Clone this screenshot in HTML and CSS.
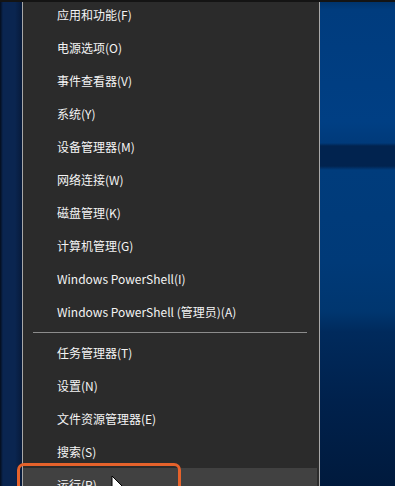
FILE: index.html
```html
<!DOCTYPE html>
<html lang="zh-CN">
<head>
<meta charset="utf-8">
<title>Win+X 菜单</title>
<link rel="stylesheet" href="styles.css">
</head>
<body>
<div class="topbar"></div>
<div class="screen">
  <div class="desk-left"></div>
  <div class="menu">
    <ul class="group group-first">
      <li class="item">应用和功能(F)</li>
      <li class="item">电源选项(O)</li>
      <li class="item">事件查看器(V)</li>
      <li class="item">系统(Y)</li>
      <li class="item">设备管理器(M)</li>
      <li class="item">网络连接(W)</li>
      <li class="item">磁盘管理(K)</li>
      <li class="item">计算机管理(G)</li>
      <li class="item">Windows PowerShell(I)</li>
      <li class="item">Windows PowerShell (管理员)(A)</li>
    </ul>
    <div class="sep"></div>
    <ul class="group">
      <li class="item">任务管理器(T)</li>
      <li class="item">设置(N)</li>
      <li class="item">文件资源管理器(E)</li>
      <li class="item">搜索(S)</li>
      <li class="item item-hover">运行(R)</li>
    </ul>
  </div>
  <div class="desk-right"></div>
  <div class="mark"></div>
  <svg class="cursor" width="14" height="20" viewBox="0 0 14 20">
    <path d="M1 1 L1 16 L4.6 12.6 L7.2 18.6 L9.4 17.6 L6.9 11.8 L11.8 11.8 Z" fill="#ffffff" stroke="#000000" stroke-width="1" stroke-linejoin="round"/>
  </svg>
</div>
</body>
</html>
```

FILE: styles.css
```css
html, body {
  margin: 0;
  padding: 0;
}
body {
  width: 395px;
  height: 486px;
  overflow: hidden;
  background: #2b2b2b;
  font-family: "Noto Sans CJK SC", "Noto Sans", sans-serif;
}
.topbar {
  height: 2px;
  background: #141414;
}
.screen {
  position: relative;
  display: flex;
  height: 484px;
}
.desk-left {
  width: 22px;
  flex: none;
  background: linear-gradient(90deg, #040d1c 0, #0a2550 3px, #0a2550 15px, #071a3a 22px);
}
.menu {
  width: 294px;
  flex: none;
  border-left: 1px solid #a8a8a8;
  border-right: 1px solid #a8a8a8;
  background: #2b2b2b;
  padding-right: 2px;
  overflow: hidden;
}
.group {
  list-style: none;
  margin: 0;
  padding: 0;
}
.group-first {
  margin-top: -4px;
}
.item {
  height: 33px;
  line-height: 33px;
  padding-left: 34px;
  color: #f4f4f4;
  font-size: 12px;
  white-space: nowrap;
}
.item-hover {
  background: #414141;
}
.sep {
  height: 8px;
  display: flex;
  align-items: center;
  padding: 0 10px 0 10px;
}
.sep::before {
  content: "";
  flex: 1;
  height: 1px;
  background: #8c8c8c;
}
.desk-right {
  flex: 1;
  background: linear-gradient(180deg,
    #00346c 0, #003c7e 8px, #003f84 120px, #003a7a 141px,
    #01234f 144px, #01234f 164px, #003c7c 168px,
    #003a78 260px, #00366f 310px, #002a5c 330px,
    #00214c 400px, #001a3d 484px);
}
.mark {
  position: absolute;
  left: 17px;
  top: 461px;
  width: 158px;
  height: 40px;
  border: 3px solid #e5622b;
  border-radius: 7px;
}
.cursor {
  position: absolute;
  left: 111px;
  top: 473px;
}
```
